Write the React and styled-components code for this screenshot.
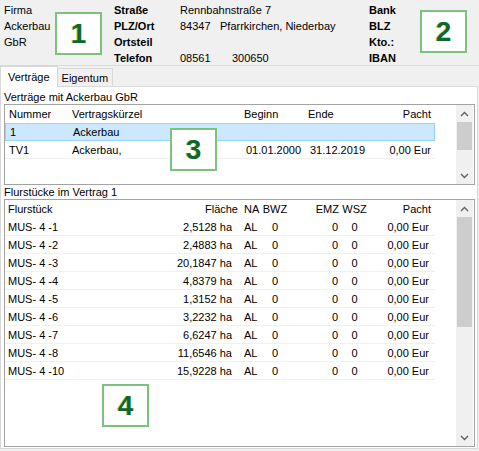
import React from "react";
import styled, { createGlobalStyle } from "styled-components";

const GlobalStyle = createGlobalStyle`
  html, body { margin: 0; padding: 0; background: #f0f0f0; }
  body {
    font-family: "Liberation Sans", Arial, sans-serif;
    font-size: 11px;
    color: #000;
  }
`;

const Window = styled.div`
  width: 479px;
  height: 451px;
  background: #f0f0f0;
  display: flex;
  flex-direction: column;
  overflow: hidden;
`;

const Header = styled.header`
  height: 65px;
  border-bottom: 1px solid #dadada;
  display: flex;
  align-items: flex-start;
  padding-left: 4px;
`;

const Lines = styled.div`
  width: ${(p) => p.$w}px;
  margin-left: ${(p) => p.$ml || 0}px;
  padding-top: 2px;
  line-height: 16px;
  font-weight: ${(p) => (p.$bold ? 700 : 400)};
  white-space: nowrap;
`;

const Line = styled.div`
  height: 16px;
`;

const Field = styled.span`
  display: inline-block;
  width: ${(p) => (p.$w ? `${p.$w}px` : "auto")};
`;

const Badge = styled.div`
  box-sizing: border-box;
  width: 47px;
  height: 43px;
  margin-top: ${(p) => p.$mt || 0}px;
  border: 2px solid #7cc27f;
  background: #fff;
  display: flex;
  align-items: center;
  justify-content: center;
  font-family: "Liberation Sans", Arial, sans-serif;
  font-weight: 700;
  font-size: 28px;
  color: #0b6a2b;
  text-shadow: -1px 0 0 rgba(190, 170, 0, 0.55);
`;

const OverlayBadge = styled(Badge)`
  position: absolute;
  left: ${(p) => p.$x}px;
  top: ${(p) => p.$y}px;
  z-index: 2;
`;

const TabStrip = styled.div`
  height: 20px;
  display: flex;
  align-items: flex-end;
`;

const Tab = styled.div`
  box-sizing: border-box;
  position: relative;
  z-index: ${(p) => (p.$active ? 1 : 0)};
  height: ${(p) => (p.$active ? 21 : 18)}px;
  margin-bottom: ${(p) => (p.$active ? -1 : 0)}px;
  padding: ${(p) => (p.$active ? "3px 7px 0" : "2px 4px 0")};
  background: ${(p) => (p.$active ? "#fff" : "#f0f0f0")};
  border: 1px solid #d9d9d9;
  border-bottom: none;
  border-left: ${(p) => (p.$first ? "1px solid #d9d9d9" : "none")};
  line-height: 14px;
  white-space: nowrap;
`;

const Panel = styled.section`
  flex: 1;
  width: 478px;
  margin-bottom: 2px;
  box-sizing: border-box;
  border: 1px solid #d9d9d9;
  background: #fff;
  padding: 0 2px 1px 3px;
  display: flex;
  flex-direction: column;
`;

const GroupLabel = styled.div`
  height: 14px;
  line-height: 14px;
  padding-top: ${(p) => p.$pt || 0}px;
`;

const ListBox = styled.div`
  position: relative;
  box-sizing: border-box;
  height: ${(p) => (p.$h ? `${p.$h}px` : "auto")};
  flex: ${(p) => (p.$h ? "none" : 1)};
  border: 1px solid #a3a3a3;
  display: flex;
`;

const TableArea = styled.div`
  flex: 1;
`;

const Row = styled.div`
  box-sizing: border-box;
  display: grid;
  grid-template-columns: ${(p) => p.$cols};
  width: 430px;
  height: 18px;
  align-items: center;
  border-bottom: 1px solid ${(p) => (p.$head ? "transparent" : "#f0f0f0")};
  ${(p) =>
    p.$selected &&
    `
    background: #cce8ff;
    border: 1px solid #99d1ff;
  `}
`;

const Cell = styled.div`
  text-align: ${(p) => p.$align || "left"};
  padding-left: ${(p) => p.$pl ?? 4}px;
  padding-right: ${(p) => p.$pr ?? 4}px;
  white-space: nowrap;
  overflow: hidden;
`;

const ScrollBar = styled.div`
  width: 17px;
  margin-right: 1px;
  background: #f0f0f0;
  display: flex;
  flex-direction: column;
`;

const ArrowButton = styled.div`
  height: 17px;
  display: flex;
  align-items: center;
  justify-content: center;
`;

const Track = styled.div`
  flex: 1;
`;

const Thumb = styled.div`
  height: ${(p) => p.$h}px;
  margin: 0 1px;
  background: #cdcdcd;
`;

function Chevron({ up }) {
  return (
    <svg width="9" height="6" viewBox="0 0 9 6">
      <polyline
        points={up ? "1,5 4.5,1.5 8,5" : "1,1 4.5,4.5 8,1"}
        fill="none"
        stroke="#606060"
        strokeWidth="1.4"
      />
    </svg>
  );
}

function Scroller({ thumb }) {
  return (
    <ScrollBar>
      <ArrowButton>
        <Chevron up />
      </ArrowButton>
      <Track>
        <Thumb $h={thumb} />
      </Track>
      <ArrowButton>
        <Chevron />
      </ArrowButton>
    </ScrollBar>
  );
}

const contractCols = "63px 172px 64px 66px 65px";
const contracts = [
  { nr: "1", name: "Ackerbau", from: "", to: "", rent: "", selected: true },
  { nr: "TV1", name: "Ackerbau,", from: "01.01.2000", to: "31.12.2019", rent: "0,00 Eur" },
];

const plotCols = "135px 100px 20px 30px 51px 27px 67px";
const plots = [
  ["MUS- 4 -1", "2,5128 ha"],
  ["MUS- 4 -2", "2,4883 ha"],
  ["MUS- 4 -3", "20,1847 ha"],
  ["MUS- 4 -4", "4,8379 ha"],
  ["MUS- 4 -5", "1,3152 ha"],
  ["MUS- 4 -6", "3,2232 ha"],
  ["MUS- 4 -7", "6,6247 ha"],
  ["MUS- 4 -8", "11,6546 ha"],
  ["MUS- 4 -10", "15,9228 ha"],
];

export default function App() {
  return (
    <Window>
      <GlobalStyle />
      <Header>
        <Lines $w={51}>
          <Line>Firma</Line>
          <Line>Ackerbau</Line>
          <Line>GbR</Line>
        </Lines>
        <Badge $mt={12}>1</Badge>
        <Lines $w={66} $ml={12} $bold>
          <Line>Straße</Line>
          <Line>PLZ/Ort</Line>
          <Line>Ortsteil</Line>
          <Line>Telefon</Line>
        </Lines>
        <Lines $w={189}>
          <Line>Rennbahnstraße 7</Line>
          <Line>
            <Field $w={40}>84347</Field>
            <Field>Pfarrkirchen, Niederbay</Field>
          </Line>
          <Line />
          <Line>
            <Field $w={52}>08561</Field>
            <Field>300650</Field>
          </Line>
        </Lines>
        <Lines $w={51} $bold>
          <Line>Bank</Line>
          <Line>BLZ</Line>
          <Line>Kto.:</Line>
          <Line>IBAN</Line>
        </Lines>
        <Badge $mt={10}>2</Badge>
      </Header>

      <TabStrip>
        <Tab $active $first>
          Verträge
        </Tab>
        <Tab>Eigentum</Tab>
      </TabStrip>

      <Panel>
        <GroupLabel $pt={3}>Verträge mit Ackerbau GbR</GroupLabel>
        <ListBox $h={81}>
          <TableArea>
            <Row $cols={contractCols} $head>
              <Cell>Nummer</Cell>
              <Cell>Vertragskürzel</Cell>
              <Cell>Beginn</Cell>
              <Cell>Ende</Cell>
              <Cell $align="right">Pacht</Cell>
            </Row>
            {contracts.map((c) => (
              <Row key={c.nr} $cols={contractCols} $selected={c.selected}>
                <Cell>{c.nr}</Cell>
                <Cell>{c.name}</Cell>
                <Cell $pl={6}>{c.from}</Cell>
                <Cell $pl={6}>{c.to}</Cell>
                <Cell $align="right" $pr={4}>
                  {c.rent}
                </Cell>
              </Row>
            ))}
          </TableArea>
          <Scroller thumb={28} />
          <OverlayBadge $x={165} $y={23}>
            3
          </OverlayBadge>
        </ListBox>

        <GroupLabel>Flurstücke im Vertrag 1</GroupLabel>
        <ListBox>
          <TableArea>
            <Row $cols={plotCols} $head>
              <Cell $pl={3}>Flurstück</Cell>
              <Cell $align="right" $pr={2}>
                Fläche
              </Cell>
              <Cell>NA</Cell>
              <Cell $align="center" $pl={0} $pr={0}>
                BWZ
              </Cell>
              <Cell $align="right" $pr={2}>
                EMZ
              </Cell>
              <Cell $align="center" $pl={0} $pr={0}>
                WSZ
              </Cell>
              <Cell $align="right">Pacht</Cell>
            </Row>
            {plots.map(([name, area]) => (
              <Row key={name} $cols={plotCols}>
                <Cell $pl={3}>{name}</Cell>
                <Cell $align="right" $pr={8}>
                  {area}
                </Cell>
                <Cell>AL</Cell>
                <Cell $align="center" $pl={0} $pr={0}>
                  0
                </Cell>
                <Cell $align="right" $pr={3}>
                  0
                </Cell>
                <Cell $align="center" $pl={0} $pr={0}>
                  0
                </Cell>
                <Cell $align="right" $pr={6}>
                  0,00 Eur
                </Cell>
              </Row>
            ))}
          </TableArea>
          <Scroller thumb={110} />
          <OverlayBadge $x={97} $y={184}>
            4
          </OverlayBadge>
        </ListBox>
      </Panel>
    </Window>
  );
}
